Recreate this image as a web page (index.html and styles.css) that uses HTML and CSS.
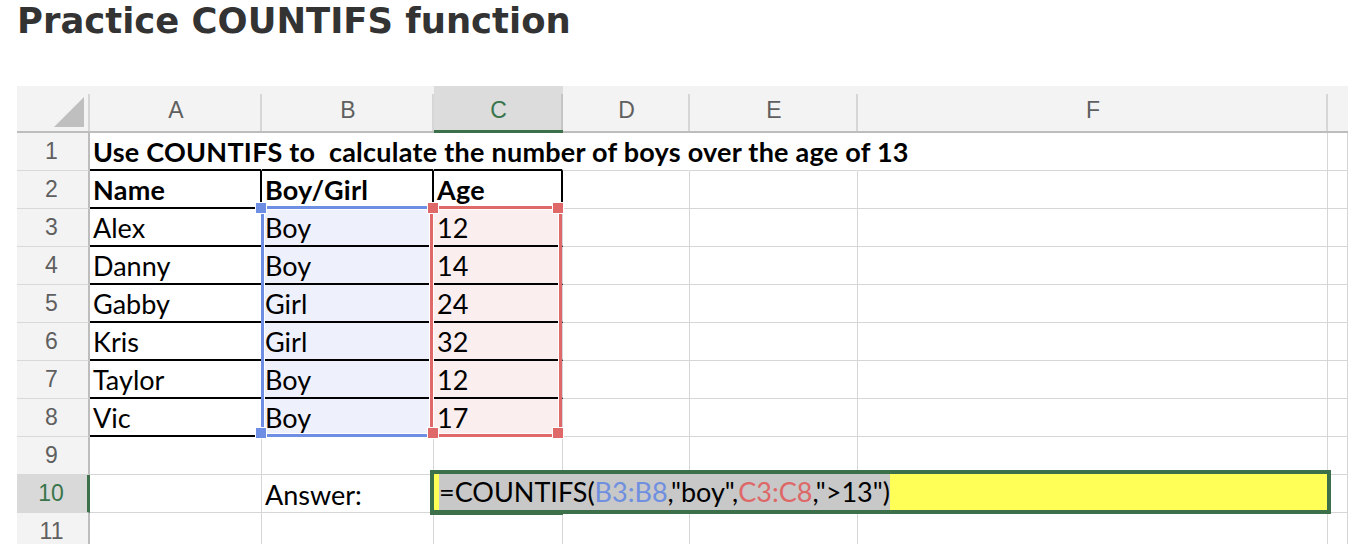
FILE: index.html
```html
<!DOCTYPE html>
<html lang="en">
<head>
<meta charset="utf-8">
<title>Practice COUNTIFS function</title>
<link rel="stylesheet" href="styles.css">
</head>
<body>
<h1 class="title">Practice COUNTIFS function</h1>
<div class="sheet">
  <div class="colh corner"><svg class="tri" width="73" height="45" viewBox="0 0 73 45"><polygon points="67,11 67,41 37,41" fill="#bfbfbf"/></svg></div>
  <div class="colh">A</div>
  <div class="colh">B</div>
  <div class="colh on">C</div>
  <div class="colh">D</div>
  <div class="colh">E</div>
  <div class="colh">F</div>
  <div class="colh last"></div>

  <div class="rowh">1</div>
  <div class="c b bb nr">Use COUNTIFS to&nbsp; calculate the number of boys over the age of 13</div>
  <div class="c bb nr"></div><div class="c bb nr"></div><div class="c nr"></div><div class="c nr"></div><div class="c"></div><div class="c"></div>

  <div class="rowh">2</div>
  <div class="c b bb br">Name</div><div class="c b bb br">Boy/Girl</div><div class="c b bb br">Age</div>
  <div class="c"></div><div class="c"></div><div class="c"></div><div class="c"></div>

  <div class="rowh">3</div>
  <div class="c bb">Alex</div><div class="c bb fb">Boy</div><div class="c bb fr">12</div>
  <div class="c"></div><div class="c"></div><div class="c"></div><div class="c"></div>

  <div class="rowh">4</div>
  <div class="c bb">Danny</div><div class="c bb fb">Boy</div><div class="c bb fr">14</div>
  <div class="c"></div><div class="c"></div><div class="c"></div><div class="c"></div>

  <div class="rowh">5</div>
  <div class="c bb">Gabby</div><div class="c bb fb">Girl</div><div class="c bb fr">24</div>
  <div class="c"></div><div class="c"></div><div class="c"></div><div class="c"></div>

  <div class="rowh">6</div>
  <div class="c bb">Kris</div><div class="c bb fb">Girl</div><div class="c bb fr">32</div>
  <div class="c"></div><div class="c"></div><div class="c"></div><div class="c"></div>

  <div class="rowh">7</div>
  <div class="c bb">Taylor</div><div class="c bb fb">Boy</div><div class="c bb fr">12</div>
  <div class="c"></div><div class="c"></div><div class="c"></div><div class="c"></div>

  <div class="rowh">8</div>
  <div class="c bb">Vic</div><div class="c bb fb">Boy</div><div class="c bb fr">17</div>
  <div class="c"></div><div class="c"></div><div class="c"></div><div class="c"></div>

  <div class="rowh">9</div>
  <div class="c"></div><div class="c"></div><div class="c"></div>
  <div class="c"></div><div class="c"></div><div class="c"></div><div class="c"></div>

  <div class="rowh on">10</div>
  <div class="c"></div><div class="c">Answer:</div>
  <div class="act"><span class="hl">=COUNTIFS(<span class="rb">B3:B8</span>,"boy",<span class="rr">C3:C8</span>,"&gt;13")</span></div>
  <div class="c"></div>

  <div class="rowh">11</div>
  <div class="c"></div><div class="c"></div><div class="c"></div>
  <div class="c"></div><div class="c"></div><div class="c"></div><div class="c"></div>

  <div class="sel sel-b"></div>
  <div class="sel sel-r"></div>
  <div class="h hb" style="left:238px;top:116px"></div>
  <div class="h hb" style="left:238px;top:341px"></div>
  <div class="h hr" style="left:410px;top:116px"></div>
  <div class="h hr" style="left:535px;top:116px"></div>
  <div class="h hr" style="left:410px;top:341px"></div>
  <div class="h hr" style="left:535px;top:341px"></div>
</div>
</body>
</html>
```

FILE: styles.css
```css
* { box-sizing: border-box; }
html, body { margin: 0; padding: 0; overflow: hidden; background: #fff; }
body { width: 1348px; height: 544px; }

.title {
  margin: 0 0 0 17px;
  font: 700 35.4px/41px "DejaVu Sans", "Open Sans", sans-serif;
  color: #333;
}

.sheet {
  position: relative;
  margin: 45px 0 0 17px;
  display: grid;
  grid-template-columns: 73px 172px 172px 129px 127px 168px 470px 20px;
  grid-template-rows: 47px repeat(11, 38px);
}

.colh {
  position: relative;
  background: #f3f3f3;
  border-bottom: 2px solid #bdbdbd;
  display: flex;
  align-items: center;
  justify-content: center;
  padding-top: 4px;
  font: 23px/1 "Liberation Sans", Arial, sans-serif;
  color: #5f5f5f;
}
.colh::after {
  content: "";
  position: absolute;
  right: 0;
  top: 8px;
  bottom: 0;
  width: 2px;
  background: #d6d6d6;
}
.colh.last::after { display: none; }
.colh.corner { padding: 0; }
.tri { position: absolute; left: 0; top: 0; }
.colh.on {
  background: #dcdcdc;
  color: #3a744a;
  border-bottom: 3px solid #3b704a;
}
.colh.on::after { background: #c4c4c4; }

.rowh {
  background: #f3f3f3;
  border-right: 2px solid #bdbdbd;
  border-bottom: 1px solid #d9d9d9;
  display: flex;
  align-items: center;
  justify-content: center;
  padding-right: 2px;
  font: 23px/1 "Liberation Sans", Arial, sans-serif;
  color: #5f5f5f;
}
.rowh.on {
  background: #d9d9d9;
  color: #3a744a;
  border-right: 3px solid #3b704a;
}

.c {
  border-right: 1px solid #d6d6d6;
  border-bottom: 1px solid #d6d6d6;
  display: flex;
  align-items: flex-end;
  padding: 0 3px 4px;
  font: 27px/26px Lato, "Liberation Sans", sans-serif;
  color: #000;
  white-space: nowrap;
}
.b { font-weight: 700; letter-spacing: 0.25px; }
.bb { border-bottom: 2px solid #000; }
.br { border-right: 2px solid #000; }
.nr { border-right-color: transparent; }
.fb { background: #eef1fb; }
.fr { background: #fbeeee; }

.act {
  grid-column: 4 / 8;
  position: relative;
  z-index: 2;
  margin: -5px -3px -1px -4px;
  border: 4px solid #3b704a;
  background: #ffff57;
  display: flex;
  padding-left: 5px;
}
.act::after {
  content: "";
  position: absolute;
  left: -4px;
  bottom: -5px;
  width: 133px;
  height: 1px;
  background: #3b704a;
}
.hl {
  background: #c8c8c8;
  display: flex;
  align-items: flex-end;
  padding-bottom: 5px;
  font: 27px/26px Lato, "Liberation Sans", sans-serif;
  color: #000;
  white-space: pre;
}
.rb { color: #6f8fe0; }
.rr { color: #de6767; }

.sel {
  position: absolute;
  border: 3px solid;
  box-shadow: inset 0 0 0 1px #fff;
  z-index: 3;
}
.sel-b { left: 244px; top: 120px; width: 172px; height: 231px; border-color: #6d8ee2; }
.sel-r { left: 413px; top: 120px; width: 132px; height: 231px; border-color: #df6868; }

.h {
  position: absolute;
  width: 12px;
  height: 12px;
  border: 1px solid #fff;
  z-index: 4;
}
.hb { background: #6d8ee2; }
.hr { background: #df6868; }
```
